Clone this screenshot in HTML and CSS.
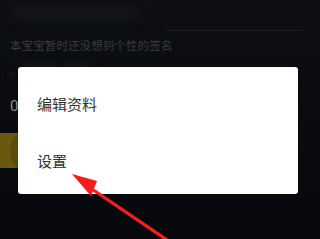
FILE: index.html
```html
<!DOCTYPE html>
<html lang="zh">
<head>
<meta charset="utf-8">
<link rel="stylesheet" href="styles.css">
</head>
<body>
<div class="page">
  <div class="top">
    <div class="name-blur"></div>
    <div class="rule"></div>
  </div>
  <div class="sign">本宝宝暂时还没想到个性的签名</div>
  <div class="tags"><span class="tag-dot"></span><span class="tag wide"></span><span class="tag"></span></div>
  <div class="stats">0</div>
  <div class="banner"><span class="banner-circle"></span></div>
</div>
<div class="menu">
  <div class="menu-item first">编辑资料</div>
  <div class="menu-item second">设置</div>
</div>
<svg class="arrow" width="320" height="239" viewBox="0 0 320 239">
  <line x1="86" y1="185" x2="170" y2="242" stroke="#ff1a1a" stroke-width="3.2" stroke-linecap="round"/>
  <polygon points="72,174 97,181 91,196" fill="#ff1a1a"/>
</svg>
</body>
</html>
```
FILE: styles.css
```css
html, body {
  margin: 0;
  padding: 0;
}
body {
  width: 320px;
  height: 239px;
  overflow: hidden;
  position: relative;
  background: linear-gradient(#0d0f13, #06080b);
  font-family: "Noto Sans CJK SC", "Noto Sans", sans-serif;
}
.page {
  display: flex;
  flex-direction: column;
}
.top {
  height: 36px;
  position: relative;
  display: flex;
  align-items: flex-start;
}
.name-blur {
  margin: 6px 0 0 12px;
  width: 125px;
  height: 14px;
  background: #141619;
  filter: blur(5px);
  border-radius: 6px;
}
.rule {
  margin: 30px 0 0 30px;
  width: 136px;
  height: 1px;
  background: #1b1f22;
}
.sign {
  margin-left: 10px;
  height: 18px;
  font-size: 11.6px;
  line-height: 18px;
  color: #393c41;
}
.tags {
  height: 36px;
  display: flex;
  align-items: flex-start;
  padding: 8px 0 0 10px;
  box-sizing: border-box;
  gap: 6px;
}
.tag-dot {
  width: 5px;
  height: 5px;
  margin-top: 10px;
  border-radius: 3px;
  background: #34111a;
  filter: blur(2px);
}
.tag {
  width: 30px;
  height: 8px;
  background: #111317;
  filter: blur(3px);
}
.tag.wide {
  width: 36px;
}
.stats {
  height: 43px;
  padding-left: 10px;
  font-family: "Roboto", sans-serif;
  font-size: 15px;
  line-height: 26px;
  color: #8a8c90;
  padding-top: 3px;
  box-sizing: border-box;
}
.banner {
  height: 35px;
  width: 40px;
  background: #6a5810;
  position: relative;
  overflow: hidden;
}
.banner-circle {
  position: absolute;
  left: 10px;
  top: -4px;
  width: 40px;
  height: 44px;
  border-radius: 50%;
  background: #5a4a0c;
}
.menu {
  position: absolute;
  left: 18px;
  top: 67px;
  width: 280px;
  height: 127px;
  background: #ffffff;
  border-radius: 3px;
  box-shadow: 0 0 1px rgba(0,0,0,0.5);
  display: flex;
  flex-direction: column;
}
.menu-item {
  padding-left: 19px;
  font-size: 15px;
  color: #333333;
  height: 60px;
  line-height: 60px;
}
.menu-item.first {
  margin-top: 7px;
}
.menu-item.second {
  margin-top: -3px;
}
.arrow {
  position: absolute;
  left: 0;
  top: 0;
}
```
